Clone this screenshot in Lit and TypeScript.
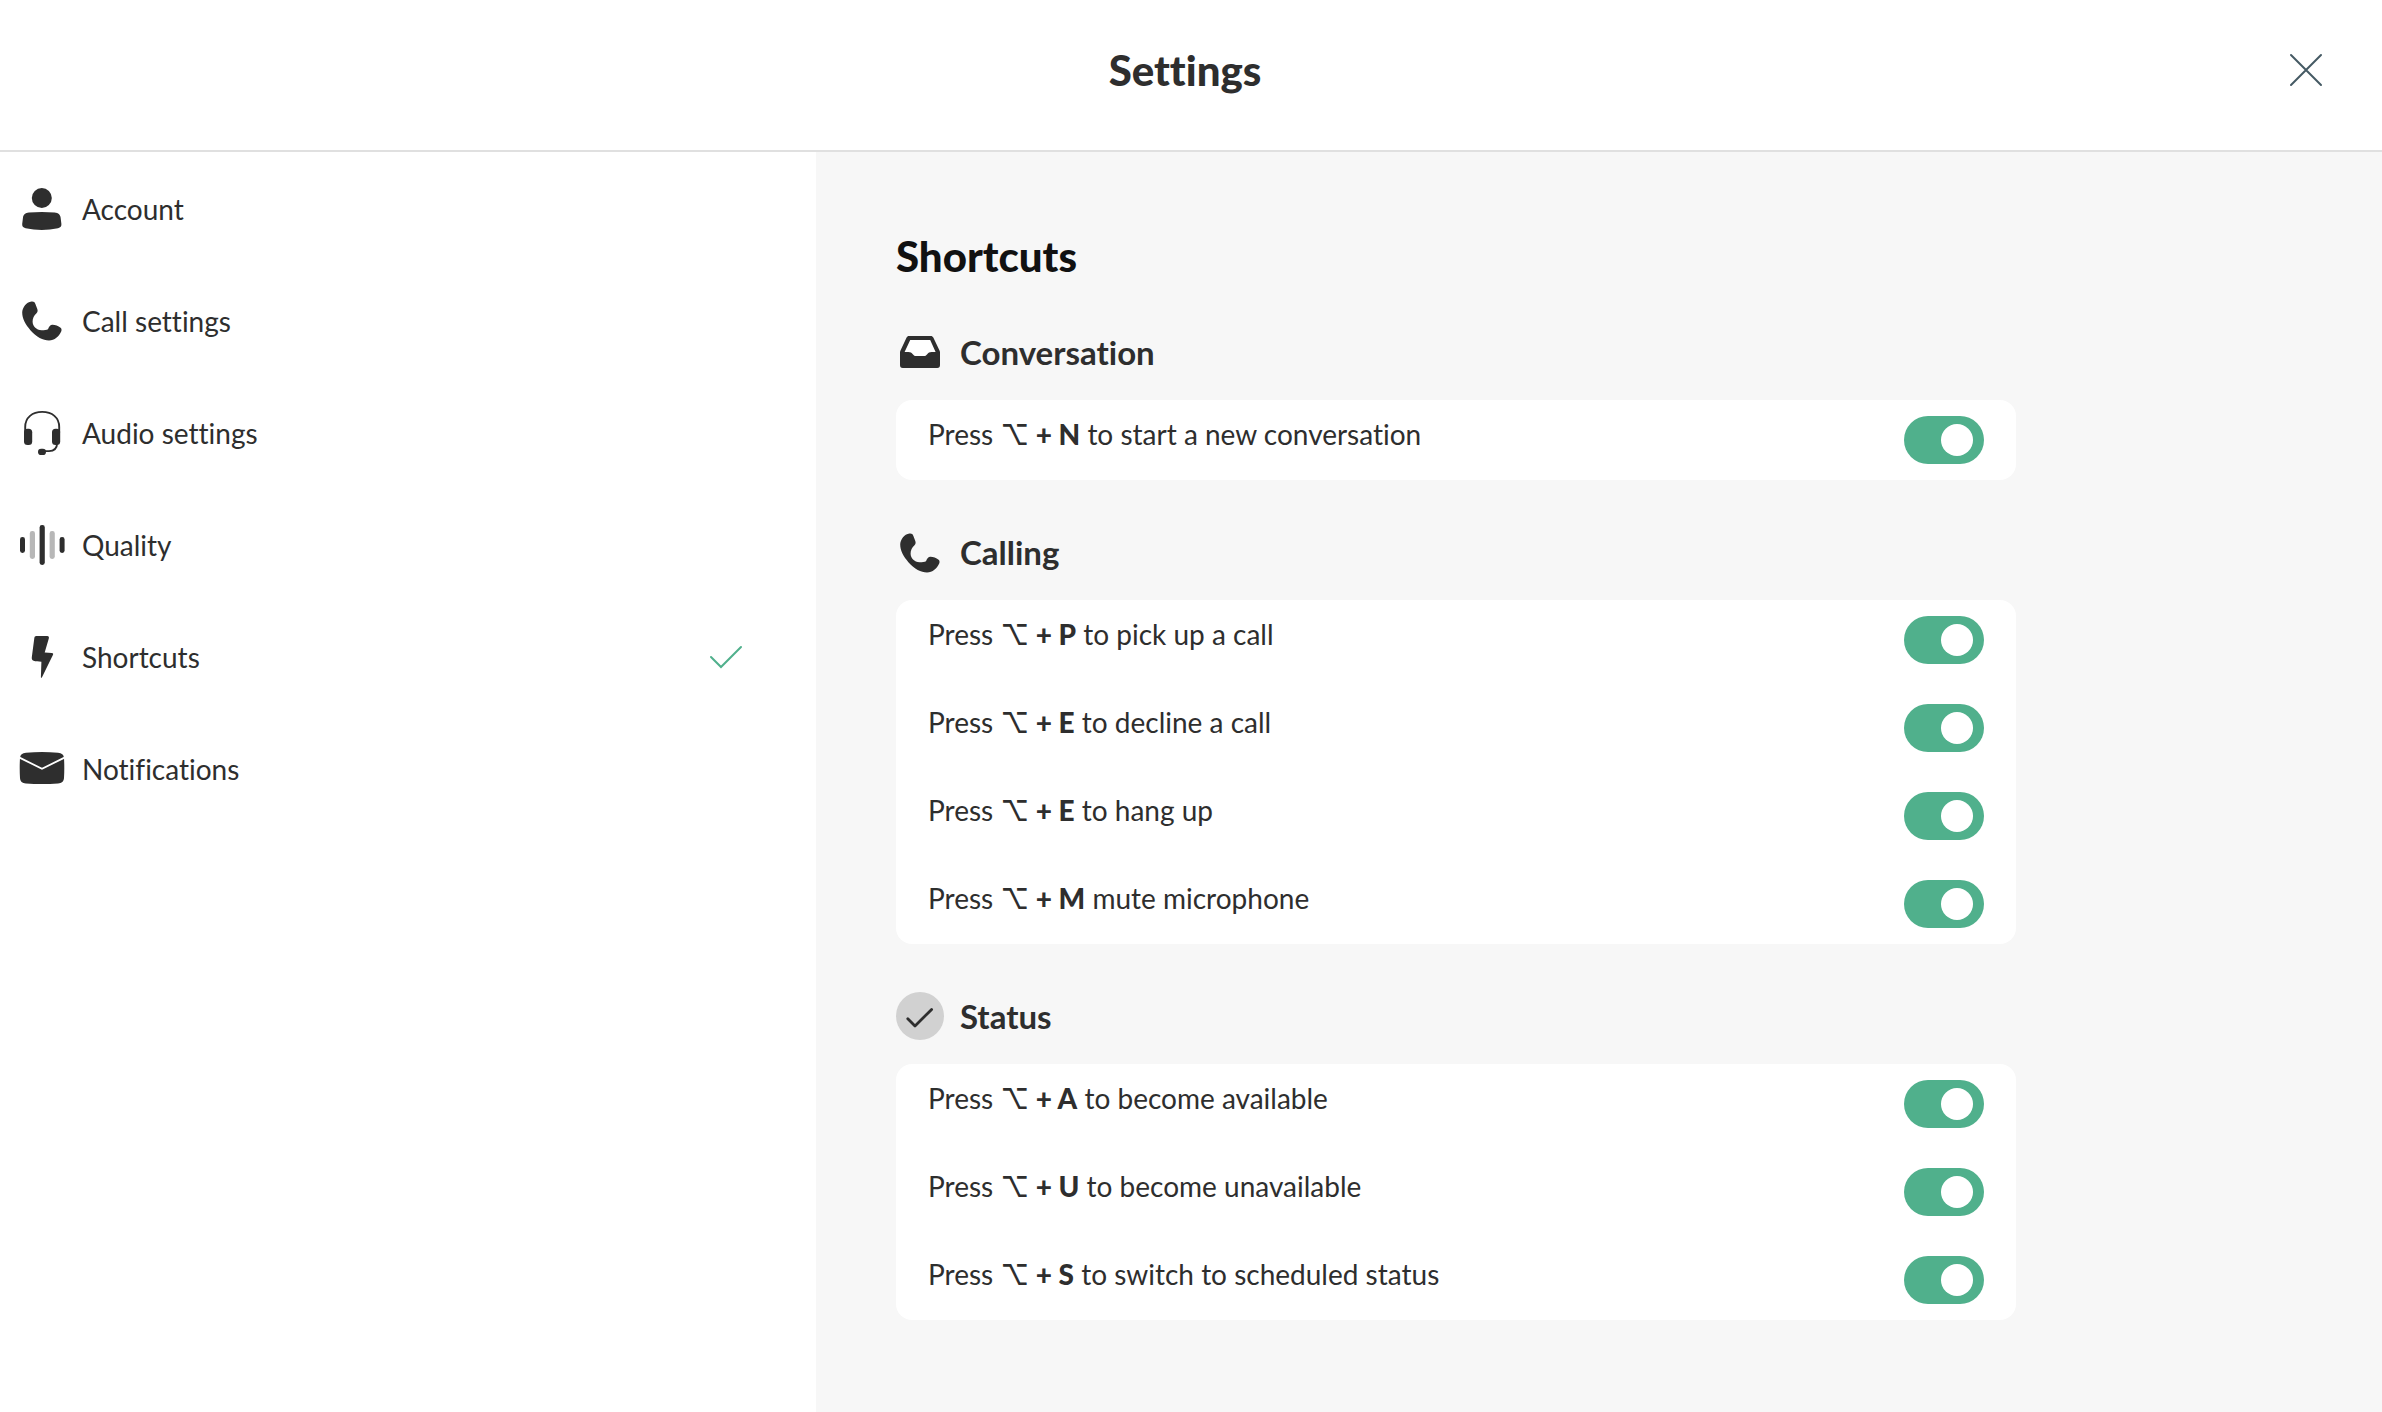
import { LitElement, html, svg, css, TemplateResult } from "lit";
import { customElement, property, state } from "lit/decorators.js";

type IconName = "account" | "phone" | "headset" | "bars" | "bolt" | "mail" | "inbox" | "status";

const glyphs: Record<IconName, TemplateResult> = {
  account: svg`
    <circle cx="23.8" cy="14" r="10"/>
    <path d="M11 28.6Q23.8 27.2 36.6 28.6C40.5 29 42 30.5 42.6 33.5L43.4 40C43.6 42.5 42.6 43.4 40 44.2Q23.8 47.8 7.6 44.2C5 43.4 4 42.5 4.2 40L5 33.5C5.6 30.5 7.1 29 11 28.6Z"/>`,
  phone: svg`
    <path d="M13.6 5.6C15.5 5.4 16.7 6.2 17.4 8L19.3 13C19.9 14.8 19.7 16 18.5 17.2C16 19.6 14.6 22.2 14.6 25.6C14.6 30.4 18.2 34.1 23.6 34.2C26.4 34.2 28.6 34 30 33.2C31 31 31.9 29.2 34 28.8C36.8 28.6 40 29.9 42.6 31.8C43.7 32.7 43.8 34.2 43.2 35.6C41 40.8 36.6 44.4 31 44.4C25 44.4 18.4 40.8 12.6 34.4C7.4 28.6 4.2 22.6 4.2 16.6C4.3 12 8 6.2 13.6 5.6Z"/>`,
  headset: svg`
    <path d="M7.2 24V19C7.2 9.4 14.4 3.9 24.2 3.9S41.2 9.4 41.2 19V24M39.2 35C39 40 36 43.1 31 43.1H25" fill="none" stroke="currentColor" stroke-width="1.9"/>
    <rect x="6" y="20.7" width="8.2" height="16.4" rx="3.6"/>
    <rect x="34" y="20.7" width="8.2" height="16.4" rx="3.6"/>
    <rect x="20" y="40.8" width="8" height="6.2" rx="3.1"/>`,
  bars: svg`
    <rect x="2" y="17" width="5" height="16" rx="2.4"/>
    <rect x="11.8" y="11" width="5.2" height="28" rx="2.4" fill="#b7b7b7"/>
    <rect x="21.6" y="5" width="5.2" height="40" rx="2.4"/>
    <rect x="31.6" y="11" width="5.2" height="28" rx="2.4" fill="#b7b7b7"/>
    <rect x="41.6" y="17" width="5" height="16" rx="2.4"/>`,
  bolt: svg`
    <path d="M18.4 4H29.2C30.8 4 31.2 4.9 30.8 6.4L26.7 20.6L33.8 20.9C35.1 21 35.5 21.6 34.9 22.9L24 45.2C23.5 46.2 22.8 46 22.9 45L23.4 29.8C20.3 29.6 17.8 29.5 15.6 28.8C14.1 28.2 13.6 27 13.8 25.2L16.3 6.2C16.5 4.7 17 4 18.4 4Z"/>`,
  mail: svg`
    <path d="M8 8.7Q24 7.5 40 8.7C43.8 9 45.8 10.6 46 14Q46.6 24 46 34C45.7 37.6 43.8 39.2 40 39.4Q24 40.6 8 39.4C4.2 39.2 2.3 37.6 2 34Q1.4 24 2 14C2.2 10.6 4.2 9 8 8.7Z"/>
    <path class="cut" d="M1.5 13.6L24 24.8L46.5 13.6" fill="none" stroke-width="1.8"/>`,
  inbox: svg`
    <path d="M13 8H34.8C36 8 36.8 8.5 37.3 9.6L43.5 22.4Q44 23.4 44 24.6V37C44 39 43.2 40 41.2 40H6.8C4.8 40 4 39 4 37V24.6Q4 23.4 4.5 22.4L10.6 9.6C11.1 8.5 11.8 8 13 8Z"/>
    <path fill="#fff" d="M14.2 12L8.6 24H12.4C14.6 24 15.6 24.8 16.8 26.2C17.8 27.5 18.8 28 20.2 28H27.8C29.2 28 30.2 27.5 31.2 26.2C32.4 24.8 33.4 24 35.6 24H39.6L34.2 12Z"/>`,
  status: svg`
    <circle cx="24" cy="24" r="24" fill="#d1d1d1"/>
    <path d="M11.8 26.8L19 34L35.6 17.4" fill="none" stroke="currentColor" stroke-width="2.8" stroke-linecap="round" stroke-linejoin="round"/>`,
};

@customElement("settings-icon")
export class SettingsIcon extends LitElement {
  @property() name: IconName = "account";

  static styles = css`
    :host { display: block; flex: none; width: 48px; height: 48px; }
    .glyph { display: block; width: 100%; height: 100%; fill: currentColor; }
    .cut { stroke: #fff; }
  `;

  render() {
    return html`<svg class="glyph" viewBox="0 0 48 48" aria-hidden="true">${glyphs[this.name]}</svg>`;
  }
}

interface Shortcut { key: string; action: string; on: boolean; }
interface Group { icon: IconName; title: string; shortcuts: Shortcut[]; }

@customElement("app-root")
export class AppRoot extends LitElement {
  @state() private selected = "Shortcuts";

  private pages: { icon: IconName; label: string }[] = [
    { icon: "account", label: "Account" },
    { icon: "phone", label: "Call settings" },
    { icon: "headset", label: "Audio settings" },
    { icon: "bars", label: "Quality" },
    { icon: "bolt", label: "Shortcuts" },
    { icon: "mail", label: "Notifications" },
  ];

  private groups: Group[] = [
    {
      icon: "inbox",
      title: "Conversation",
      shortcuts: [{ key: "N", action: "to start a new conversation", on: true }],
    },
    {
      icon: "phone",
      title: "Calling",
      shortcuts: [
        { key: "P", action: "to pick up a call", on: true },
        { key: "E", action: "to decline a call", on: true },
        { key: "E", action: "to hang up", on: true },
        { key: "M", action: "mute microphone", on: true },
      ],
    },
    {
      icon: "status",
      title: "Status",
      shortcuts: [
        { key: "A", action: "to become available", on: true },
        { key: "U", action: "to become unavailable", on: true },
        { key: "S", action: "to switch to scheduled status", on: true },
      ],
    },
  ];

  static styles = css`
    :host {
      display: flex;
      flex-direction: column;
      min-height: 100vh;
      background: #fff;
      color: #2e2e2e;
      font: 400 28px/36px Lato, "DejaVu Sans", sans-serif;
      font-variant-ligatures: none;
    }
    * { box-sizing: border-box; }
    h1, h2, h3, ul { margin: 0; padding: 0; }
    ul { list-style: none; }
    button { border: 0; padding: 0; background: none; color: inherit; font: inherit; cursor: pointer; }

    .header {
      display: grid;
      grid-template-columns: 1fr auto 1fr;
      align-items: center;
      height: 152px;
      padding: 0 52px 10px 40px;
      border-bottom: 2px solid #e0e0e0;
    }
    .title { grid-column: 2; font-size: 42px; line-height: 48px; font-weight: 900; }
    .close { justify-self: end; width: 48px; height: 48px; }
    .close svg { display: block; width: 48px; height: 48px; }

    .body {
      flex: 1;
      display: grid;
      grid-template-columns: minmax(320px, 816px) minmax(0, 1fr);
    }
    .item {
      display: flex;
      align-items: center;
      gap: 16px;
      width: 100%;
      height: 112px;
      padding: 0 70px 0 18px;
      text-align: left;
    }
    .label { flex: 1; padding-top: 2px; }
    .tick { width: 40px; height: 40px; }

    .main { padding: 80px; background: #f7f7f7; }
    .heading { color: #111; font-size: 42px; line-height: 48px; font-weight: 900; }
    .group { max-width: 1120px; margin-top: 48px; }
    .group-head { display: flex; align-items: center; gap: 16px; margin-bottom: 24px; }
    .group-title { font-size: 33px; line-height: 40px; font-weight: 700; }
    .panel { border-radius: 16px; background: #fff; }
    .row {
      display: flex;
      align-items: flex-start;
      justify-content: space-between;
      gap: 32px;
      padding: 16px 32px;
    }
    .row + .row { padding-top: 24px; }
    .combo { font-family: inherit; font-weight: 900; }
    .option { font-family: Inter, "DejaVu Sans", sans-serif; font-weight: 500; }
    .switch {
      appearance: none;
      display: flex;
      flex: none;
      align-items: center;
      width: 80px;
      height: 48px;
      margin: 0;
      padding: 0 11px;
      border-radius: 24px;
      background: #b7b7b7;
      cursor: pointer;
    }
    .switch::before {
      content: "";
      width: 32px;
      height: 32px;
      border-radius: 50%;
      background: #fff;
    }
    .switch:checked { justify-content: flex-end; background: #50b08c; }
  `;

  private toggle(shortcut: Shortcut, e: Event) {
    shortcut.on = (e.target as HTMLInputElement).checked;
    this.requestUpdate();
  }

  private renderGroup(group: Group, g: number) {
    return html`
      <section class="group">
        <div class="group-head">
          <settings-icon .name=${group.icon}></settings-icon>
          <h3 class="group-title">${group.title}</h3>
        </div>
        <div class="panel">
          ${group.shortcuts.map((s, i) => html`
            <div class="row">
              <label for="s-${g}-${i}">Press <kbd class="combo"><span class="option">⌥</span> + ${s.key}</kbd> ${s.action}</label>
              <input class="switch" type="checkbox" role="switch" id="s-${g}-${i}"
                .checked=${s.on} @change=${(e: Event) => this.toggle(s, e)}>
            </div>`)}
        </div>
      </section>`;
  }

  render() {
    return html`
      <header class="header">
        <h1 class="title">Settings</h1>
        <button class="close" aria-label="Close">
          <svg viewBox="0 0 48 48" fill="none" stroke="#455a64" stroke-width="2" stroke-linecap="round">
            <path d="M9 9L39 39M39 9L9 39"/>
          </svg>
        </button>
      </header>
      <div class="body">
        <nav>
          <ul>
            ${this.pages.map((p) => html`
              <li>
                <button class="item" @click=${() => (this.selected = p.label)}>
                  <settings-icon .name=${p.icon}></settings-icon>
                  <span class="label">${p.label}</span>
                  ${p.label === this.selected
                    ? html`<svg class="tick" viewBox="0 0 40 40" fill="none" stroke="#50b08c" stroke-width="2" stroke-linecap="round" aria-hidden="true">
                        <path d="M5 21L15 31L35 11"/>
                      </svg>`
                    : null}
                </button>
              </li>`)}
          </ul>
        </nav>
        <main class="main">
          <h2 class="heading">Shortcuts</h2>
          ${this.groups.map((g, i) => this.renderGroup(g, i))}
        </main>
      </div>`;
  }
}
